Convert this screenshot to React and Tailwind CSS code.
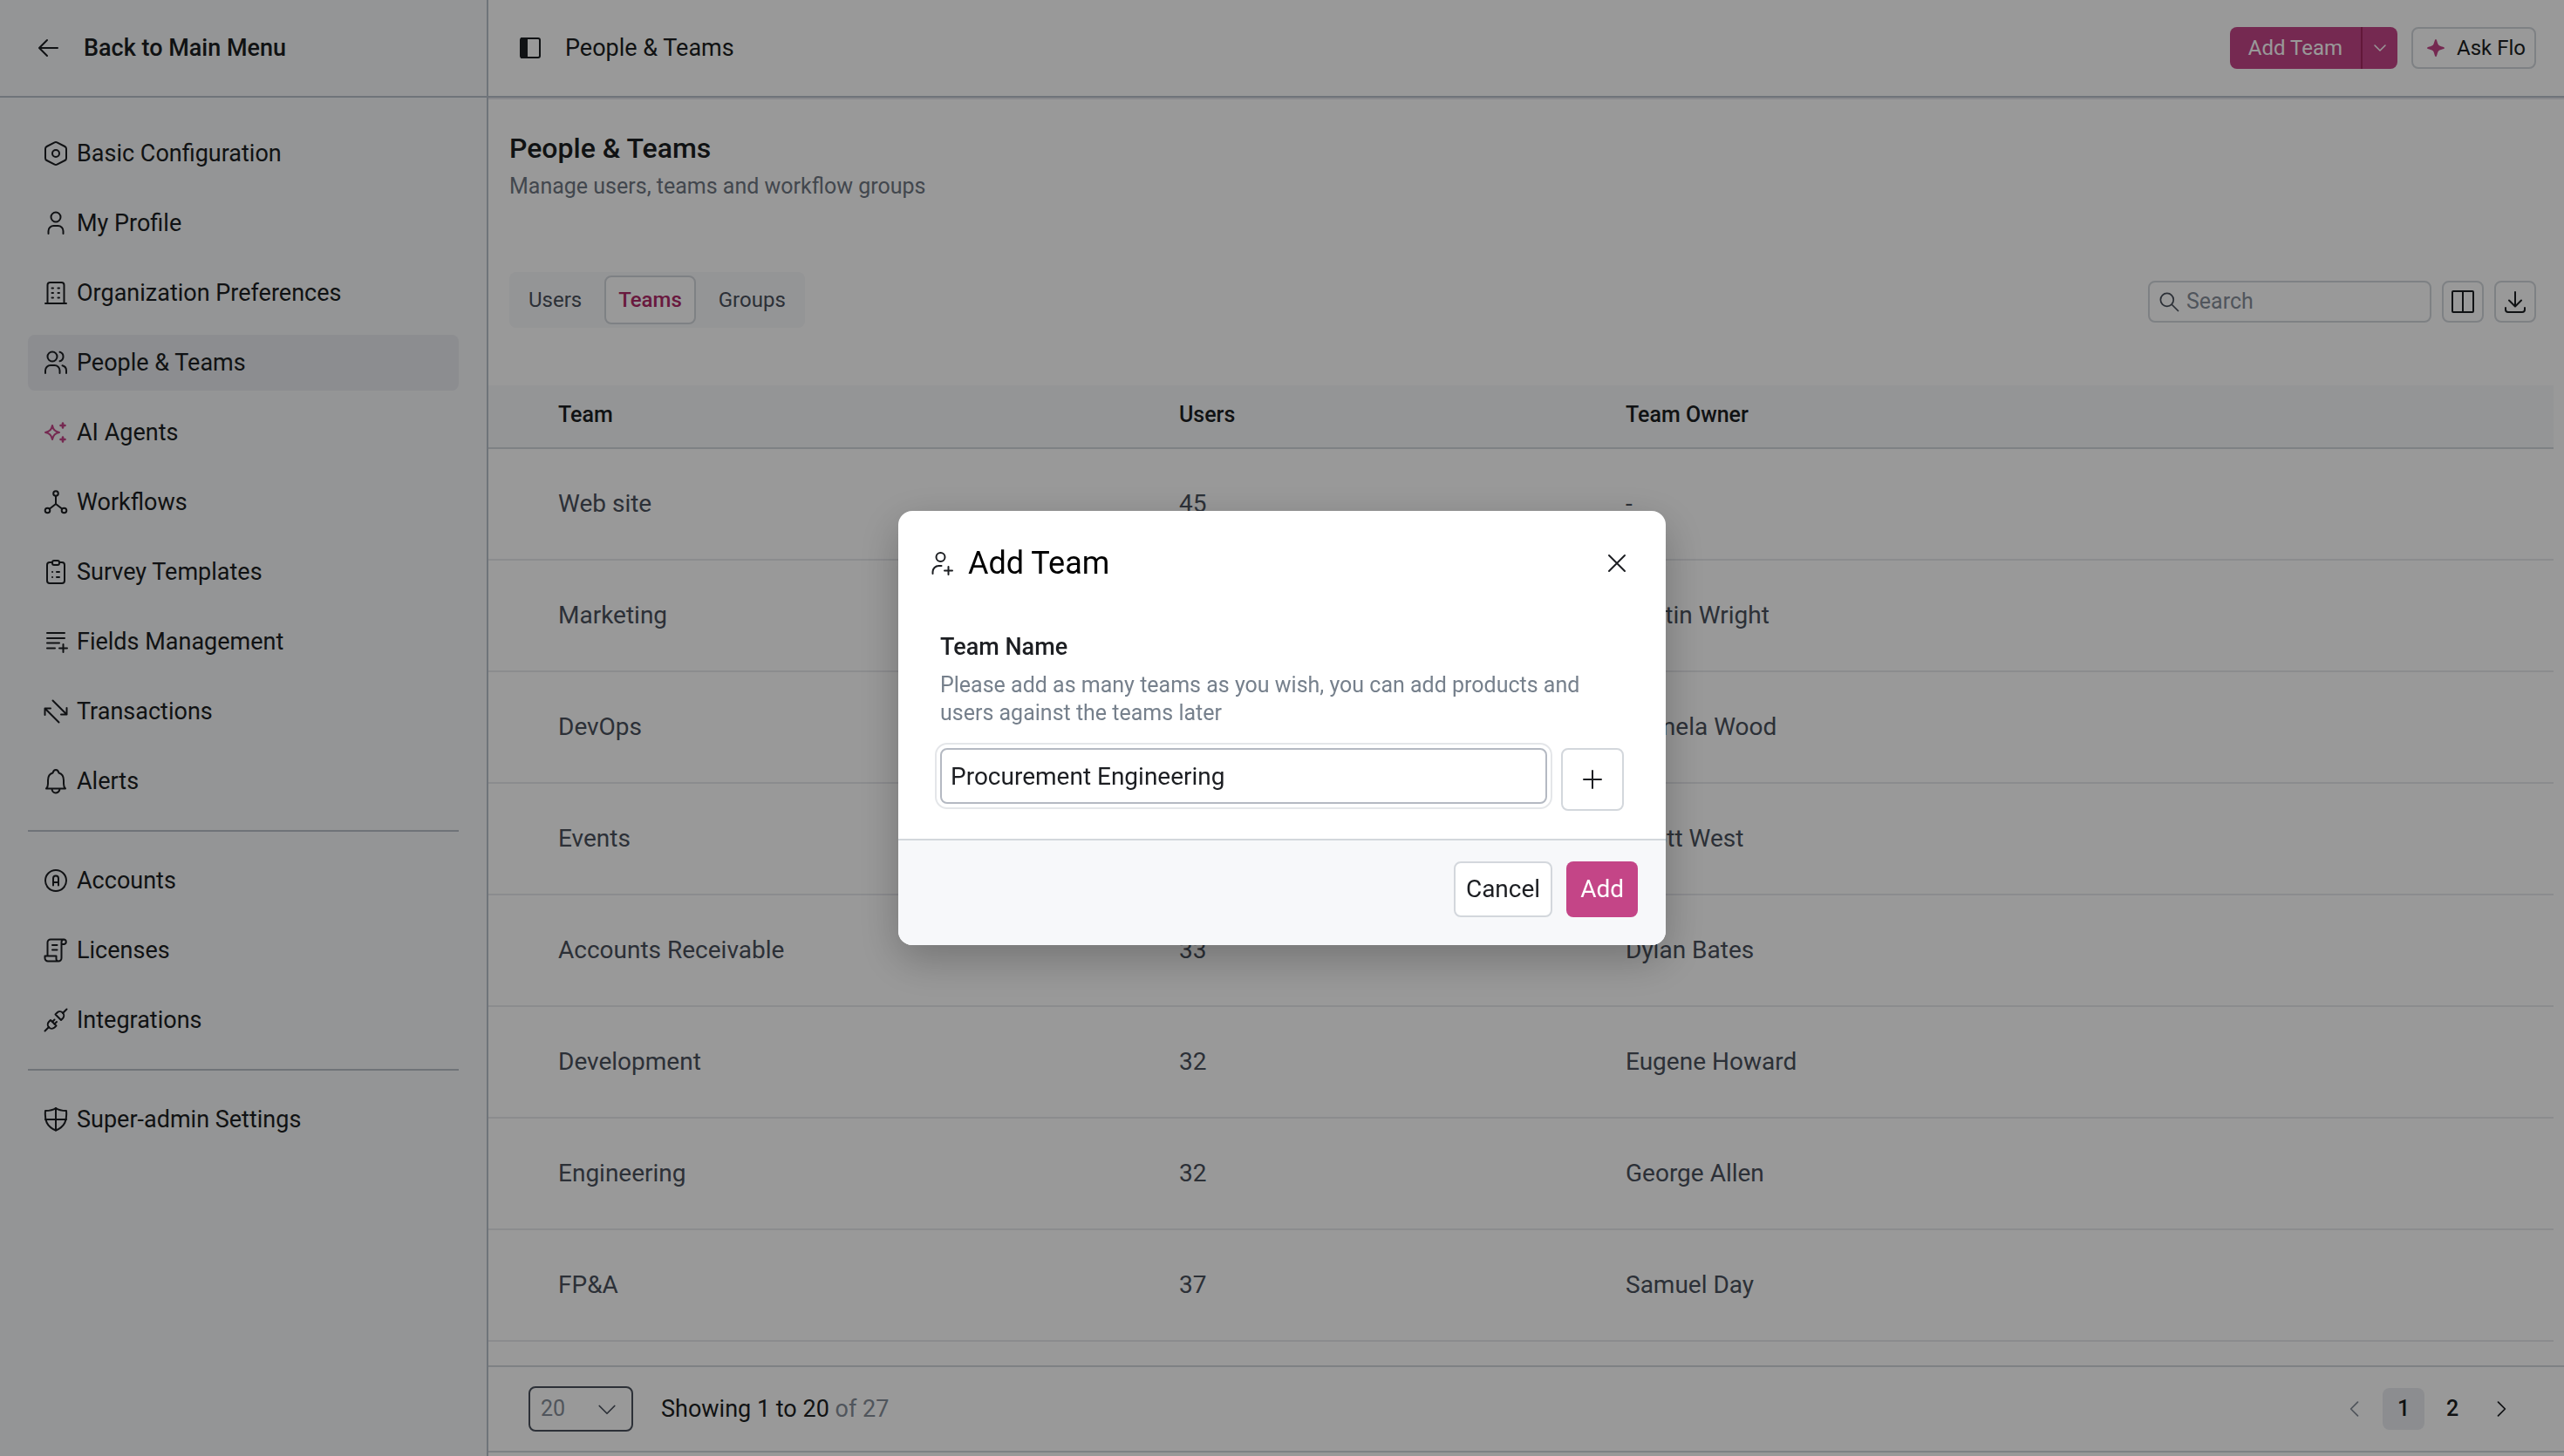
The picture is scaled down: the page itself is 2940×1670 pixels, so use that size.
import React, { useState } from 'react';

const pageFont = "font-['Roboto','Liberation_Sans',sans-serif]";

const Icon = ({ children, className = 'size-8' }) => (
  <svg
    viewBox="0 0 32 32"
    fill="none"
    stroke="currentColor"
    strokeWidth="2"
    strokeLinecap="round"
    strokeLinejoin="round"
    aria-hidden="true"
    className={`shrink-0 ${className}`}
  >
    {children}
  </svg>
);

const icons = {
  config: (
    <>
      <path d="M14.6 3.3a3 3 0 0 1 2.8 0l9 4.7A3 3 0 0 1 28 10.6v10.8a3 3 0 0 1-1.6 2.6l-9 4.7a3 3 0 0 1-2.8 0l-9-4.7A3 3 0 0 1 4 21.4V10.6A3 3 0 0 1 5.600 8z" />
      <circle cx="16" cy="16" r="4" />
    </>
  ),
  profile: (
    <>
      <circle cx="16" cy="9" r="5.500" />
      <path d="M7.500 28v-3a6 6 0 0 1 6-6h5a6 6 0 0 1 6 6v3" />
    </>
  ),
  building: (
    <>
      <path d="M4 28h24M6.500 28V7a3 3 0 0 1 3-3h13a3 3 0 0 1 3 3v21" />
      <path d="M11.500 10.500h1.500M18.500 10.500h1.500M11.500 16h1.500M18.500 16h1.500M11.500 21.500h1.500M18.500 21.500h1.500" />
    </>
  ),
  people: (
    <>
      <circle cx="12" cy="9" r="5.500" />
      <path d="M4 28v-3a6 6 0 0 1 6-6h4.500a6 6 0 0 1 6 6v3M20.500 3.700a5.500 5.500 0 0 1 0 10.600M23.500 19.300a6 6 0 0 1 4.500 5.800V28" />
    </>
  ),
  agents: (
    <>
      <path d="M12 8c.8 4.500 3 7.200 8 8-5 .8-7.200 3.500-8 8-.8-4.500-3-7.200-8-8 5-.8 7.200-3.500 8-8z" />
      <path d="M24 5.500v5M21.500 8h5M24 21.500v5M21.500 24h5" strokeWidth="2.600" />
    </>
  ),
  workflows: (
    <>
      <circle cx="16" cy="6" r="2.800" />
      <circle cx="6.500" cy="25.500" r="2.800" />
      <circle cx="25.500" cy="25.500" r="2.800" />
      <path d="M16 9v9M9 23.500l7-5.500 7 5.500" />
    </>
  ),
  survey: (
    <>
      <path d="M12 5H9a3 3 0 0 0-3 3v18a3 3 0 0 0 3 3h14a3 3 0 0 0 3-3V8a3 3 0 0 0-3-3h-3" />
      <rect x="12" y="3" width="8" height="5" rx="2" />
      <path d="M12 16h.1M12 22h.1M17 16h3M17 22h3" />
    </>
  ),
  fields: <path d="M6 6h20M6 12h20M6 17.500h14M6 23.500h9M20 23.500h9M24.500 19v9" />,
  transactions: <path d="M12.500 3.500l16 16M28.500 12v7.500H22M19.500 28.500L3.500 12.500M3.500 20v-7.500H10" />,
  alerts: (
    <path d="M11.500 24.500a4.500 5 0 0 0 9 0M5 24.500h22c-1.500-1.500-2-3-2-5.500v-4c0-4-2-7.500-5.500-8.500C19 4.500 18 3 16 3s-3 1.500-3.500 3.500C9 7.500 7 11 7 15v4c0 2.500-.5 4-2 5.500z" />
  ),
  accounts: (
    <>
      <circle cx="16" cy="16" r="12" />
      <path d="M13 21.500v-8a3 3 0 0 1 6 0v8M13 18h6" />
    </>
  ),
  licenses: (
    <>
      <path d="M6.500 22V7a3.500 3.500 0 0 1 3.500-3.500h15.500M25.500 3.500a2.800 2.800 0 0 1 0 5.500h-3V6.500a3 3 0 0 1 3-3zM22.500 9v16a3.500 3.500 0 0 1-3.500 3.500M19 28.500a2.500 2.500 0 0 1-2.500-2.500v-3.500H3.500V25A3.500 3.500 0 0 0 7 28.500z" />
      <path d="M12 10h5.500M12 15.500h5.500" />
    </>
  ),
  integrations: (
    <>
      <path d="M10 16l6.500 6.500-2 2a4.600 4.600 0 0 1-6.500-6.500zM22 16l-6.500-6.500 2-2a4.600 4.600 0 0 1 6.500 6.500z" />
      <path d="M3.500 28.500L8 24M24 8l4.500-4.500M12 18l2.500-2.500M14.500 20.500L17 18" />
    </>
  ),
  shield: (
    <>
      <path d="M16 3c3.500 2.500 7.500 3 12 3 1 11-1.500 18-12 22.500C5.500 24 3 17 4 6c4.500 0 8.500-.5 12-3z" />
      <path d="M16 3v25.500M4 16h24" />
    </>
  ),
};

const navGroups = [
  [
    { icon: 'config', label: 'Basic Configuration' },
    { icon: 'profile', label: 'My Profile' },
    { icon: 'building', label: 'Organization Preferences' },
    { icon: 'people', label: 'People & Teams', active: true },
    { icon: 'agents', label: 'AI Agents', pink: true },
    { icon: 'workflows', label: 'Workflows' },
    { icon: 'survey', label: 'Survey Templates' },
    { icon: 'fields', label: 'Fields Management' },
    { icon: 'transactions', label: 'Transactions' },
    { icon: 'alerts', label: 'Alerts' },
  ],
  [
    { icon: 'accounts', label: 'Accounts' },
    { icon: 'licenses', label: 'Licenses' },
    { icon: 'integrations', label: 'Integrations' },
  ],
  [{ icon: 'shield', label: 'Super-admin Settings' }],
];

const teams = [
  { name: 'Web site', users: 45, owner: '-' },
  { name: 'Marketing', users: 41, owner: 'Justin Wright' },
  { name: 'DevOps', users: 38, owner: 'Pamela Wood' },
  { name: 'Events', users: 35, owner: 'Scott West' },
  { name: 'Accounts Receivable', users: 33, owner: 'Dylan Bates' },
  { name: 'Development', users: 32, owner: 'Eugene Howard' },
  { name: 'Engineering', users: 32, owner: 'George Allen' },
  { name: 'FP&A', users: 37, owner: 'Samuel Day' },
];

const Sidebar = () => (
  <aside className="w-[560px] shrink-0 bg-[#f7f8fa] border-r-2 border-[#bac2cc]">
    <a href="#main" className="flex items-center h-28 pl-10 gap-6 border-b-2 border-[#bac2cc] text-[27px] font-medium">
      <Icon>
        <path d="M26 16H6M14 7l-9 9 9 9" />
      </Icon>
      Back to Main Menu
    </a>
    <nav className="px-8 pt-8">
      {navGroups.map((group, i) => (
        <ul key={i} className={i > 0 ? 'flex flex-col gap-4 mt-6 pt-6 border-t-2 border-[#bac0c8]' : 'flex flex-col gap-4'}>
          {group.map((item) => (
            <li key={item.label}>
              <a
                href={`#${item.icon}`}
                className={`flex items-center h-16 px-4 gap-2 rounded-lg text-[27px] ${item.active ? 'bg-[#e9ebf0]' : ''}`}
              >
                <Icon className={item.pink ? 'size-8 text-[#c44587]' : 'size-8'}>{icons[item.icon]}</Icon>
                {item.label}
              </a>
            </li>
          ))}
        </ul>
      ))}
    </nav>
  </aside>
);

const TopBar = () => (
  <header className="flex items-center h-28 shrink-0 px-8 border-b-2 border-[#bac2cc] shadow-[0_2px_0_#e4e7ec]">
    <button aria-label="Toggle sidebar" className="mr-6">
      <Icon>
        <rect x="5" y="5" width="22" height="22" rx="2" />
        <path d="M6 5h6v22H6z" fill="currentColor" />
      </Icon>
    </button>
    <span className="text-[27px]">People &amp; Teams</span>
    <div className="flex ml-auto gap-4 text-[24px]">
      <div className="flex h-12 rounded-lg overflow-hidden bg-[#c44587] text-white">
        <button className="px-[21px]">Add Team</button>
        <button aria-label="More options" className="w-[42px] flex items-center justify-center border-l-2 border-[#a32860]">
          <Icon className="size-6">
            <path d="M8 12l8 8 8-8" />
          </Icon>
        </button>
      </div>
      <button className="flex items-center h-12 px-2.5 gap-2 rounded-lg border-2 border-[#d3d7dc]">
        <svg viewBox="0 0 32 32" className="size-8 text-[#c44587]" fill="currentColor" aria-hidden="true">
          <path d="M16 6c1.500 0 1.600 5 3.300 6.700C21 14.400 26 14.500 26 16s-5 1.600-6.700 3.300C17.600 21 17.500 26 16 26s-1.600-5-3.300-6.700C11 17.600 6 17.500 6 16s5-1.600 6.700-3.300C14.400 11 14.500 6 16 6z" />
        </svg>
        Ask Flo
      </button>
    </div>
  </header>
);

const Toolbar = () => (
  <div className="flex items-start justify-between pl-6 pr-8 mt-20">
    <div role="tablist" className="flex p-1 rounded-lg bg-[#f7f8fa] text-[24px] text-[#4a515c]">
      <button role="tab" aria-selected="false" className="h-14 px-[18px]">Users</button>
      <button role="tab" aria-selected="true" className="h-14 mx-2 px-3.5 rounded-lg border-2 border-[#d3d7dc] bg-white text-[#b02a68] font-medium">Teams</button>
      <button role="tab" aria-selected="false" className="h-14 px-[18px]">Groups</button>
    </div>
    <div className="flex gap-3 mt-2.5">
      <label className="flex items-center w-[325px] h-12 pl-2 gap-1.5 rounded-lg border-2 border-[#d3d7dc] text-[#4a515c]">
        <Icon className="size-7">
          <circle cx="13.500" cy="13.500" r="8.500" />
          <path d="M20 20l8 8" />
        </Icon>
        <input type="search" placeholder="Search" aria-label="Search" className="w-full text-[25px] placeholder:text-[#868e99] outline-none" />
      </label>
      <button aria-label="Columns" className="size-12 flex items-center justify-center rounded-lg border-2 border-[#d3d7dc]">
        <Icon>
          <rect x="4" y="4" width="24" height="24" rx="1" />
          <path d="M16 4v24" />
        </Icon>
      </button>
      <button aria-label="Download" className="size-12 flex items-center justify-center rounded-lg border-2 border-[#d3d7dc]">
        <Icon>
          <path d="M16 5v16M9 14.500l7 7 7-7M5 23v2a3 3 0 0 0 3 3h16a3 3 0 0 0 3-3v-2" />
        </Icon>
      </button>
    </div>
  </div>
);

const TeamsTable = () => (
  <div className="flex-1 min-h-0 overflow-hidden mt-[66px] pr-3">
    <table className="w-full table-fixed text-left border-collapse">
      <colgroup>
        <col className="w-[792px]" />
        <col className="w-[512px]" />
        <col />
      </colgroup>
      <thead>
        <tr className="h-[72px] bg-[#f7f8fa] border-b-2 border-[#d3d7dc] text-[25px]">
          <th className="pl-20 pb-1 font-medium">Team</th>
          <th className="pb-1 font-medium">Users</th>
          <th className="pb-1 font-medium">Team Owner</th>
        </tr>
      </thead>
      <tbody className="text-[28px] text-[#4a515c]">
        {teams.map((team) => (
          <tr key={team.name} className="h-32 border-b-2 border-[#e8e9ed]">
            <td className="pl-20">{team.name}</td>
            <td>{team.users}</td>
            <td>{team.owner}</td>
          </tr>
        ))}
      </tbody>
    </table>
  </div>
);

const Pagination = () => (
  <footer className="flex items-center shrink-0 h-[100px] pl-[46px] pr-12 mb-1 border-y-2 border-[#d3d7dc] text-[27px]">
    <div className="grid items-center">
      <select
        aria-label="Rows per page"
        defaultValue="20"
        className="col-start-1 row-start-1 appearance-none w-[120px] h-[52px] pl-3 rounded-lg border-2 border-[#4a515c] text-[25px] text-[#868e99]"
      >
        <option>20</option>
        <option>50</option>
      </select>
      <Icon className="col-start-1 row-start-1 justify-self-end mr-4 size-7 pointer-events-none text-[#4a515c]">
        <path d="M6 12l10 10 10-10" />
      </Icon>
    </div>
    <p className="ml-8">
      Showing 1 to 20 <span className="text-[#868e99]">of 27</span>
    </p>
    <div className="flex gap-2 ml-auto text-[25px] font-medium">
      <button aria-label="Previous page" className="size-12 flex items-center justify-center text-[#868e99]">
        <Icon className="size-7">
          <path d="M20 7l-9 9 9 9" />
        </Icon>
      </button>
      <button className="size-12 rounded-lg bg-[#e9ebf0]">1</button>
      <button className="size-12 rounded-lg">2</button>
      <button aria-label="Next page" className="size-12 flex items-center justify-center">
        <Icon className="size-7">
          <path d="M12 7l9 9-9 9" />
        </Icon>
      </button>
    </div>
  </footer>
);

const AddTeamModal = () => {
  const [name, setName] = useState('Procurement Engineering');

  return (
    <div className="fixed inset-0 flex items-center justify-center bg-black/40">
      <div role="dialog" aria-labelledby="modal-title" className="w-[880px] rounded-2xl overflow-hidden bg-white shadow-[0_16px_48px_rgba(0,0,0,0.25)]">
        <div className="flex items-center h-[120px] pl-[34px] pr-10">
          <Icon>
            <circle cx="14.500" cy="9" r="5" />
            <path d="M5.500 28v-2a7 7 0 0 1 7-7h3M23.500 20v9M19 24.500h9" />
          </Icon>
          <h2 id="modal-title" className="ml-3.5 text-[36px] text-black">Add Team</h2>
          <button aria-label="Close" className="ml-auto">
            <Icon>
              <path d="M7 7l18 18M25 7L7 25" />
            </Icon>
          </button>
        </div>
        <div className="px-12 pt-4 pb-8">
          <label htmlFor="team-name" className="block text-[27px] leading-10 font-medium">Team Name</label>
          <p className="mt-2 text-[25px] leading-8 text-[#76808c]">
            Please add as many teams as you wish, you can add products and users against the teams later
          </p>
          <div className="flex items-start gap-4 mt-6">
            <input
              id="team-name"
              type="text"
              value={name}
              onChange={(e) => setName(e.target.value)}
              className="flex-1 h-16 px-2.5 rounded-lg border-2 border-[#b4b9c2] text-[28px] outline-2 outline-offset-4 outline-[#e4e6e9]"
            />
            <button aria-label="Add another team" className="size-[72px] flex items-center justify-center rounded-lg border-2 border-[#d3d7dc]">
              <Icon>
                <path d="M16 6v20M6 16h20" />
              </Icon>
            </button>
          </div>
        </div>
        <div className="flex justify-end gap-4 h-[122px] pt-6 pr-8 bg-[#f7f8fa] border-t-2 border-[#d3d7dc] text-[28px]">
          <button className="h-16 px-3 rounded-lg border-2 border-[#d3d7dc] bg-white">Cancel</button>
          <button className="h-16 px-4 rounded-lg bg-[#c44587] text-white">Add</button>
        </div>
      </div>
    </div>
  );
};

const App = () => (
  <div className={`flex h-screen bg-white text-[#1c1e22] ${pageFont}`}>
    <Sidebar />
    <main id="main" className="flex-1 min-w-0 flex flex-col">
      <TopBar />
      <div className="pl-6 pt-9">
        <h1 className="text-[32px] leading-[44px] font-medium">People &amp; Teams</h1>
        <p className="mt-1 text-[25px] leading-9 text-[#6f7782]">Manage users, teams and workflow groups</p>
      </div>
      <Toolbar />
      <TeamsTable />
      <Pagination />
    </main>
    <AddTeamModal />
  </div>
);

export default App;
